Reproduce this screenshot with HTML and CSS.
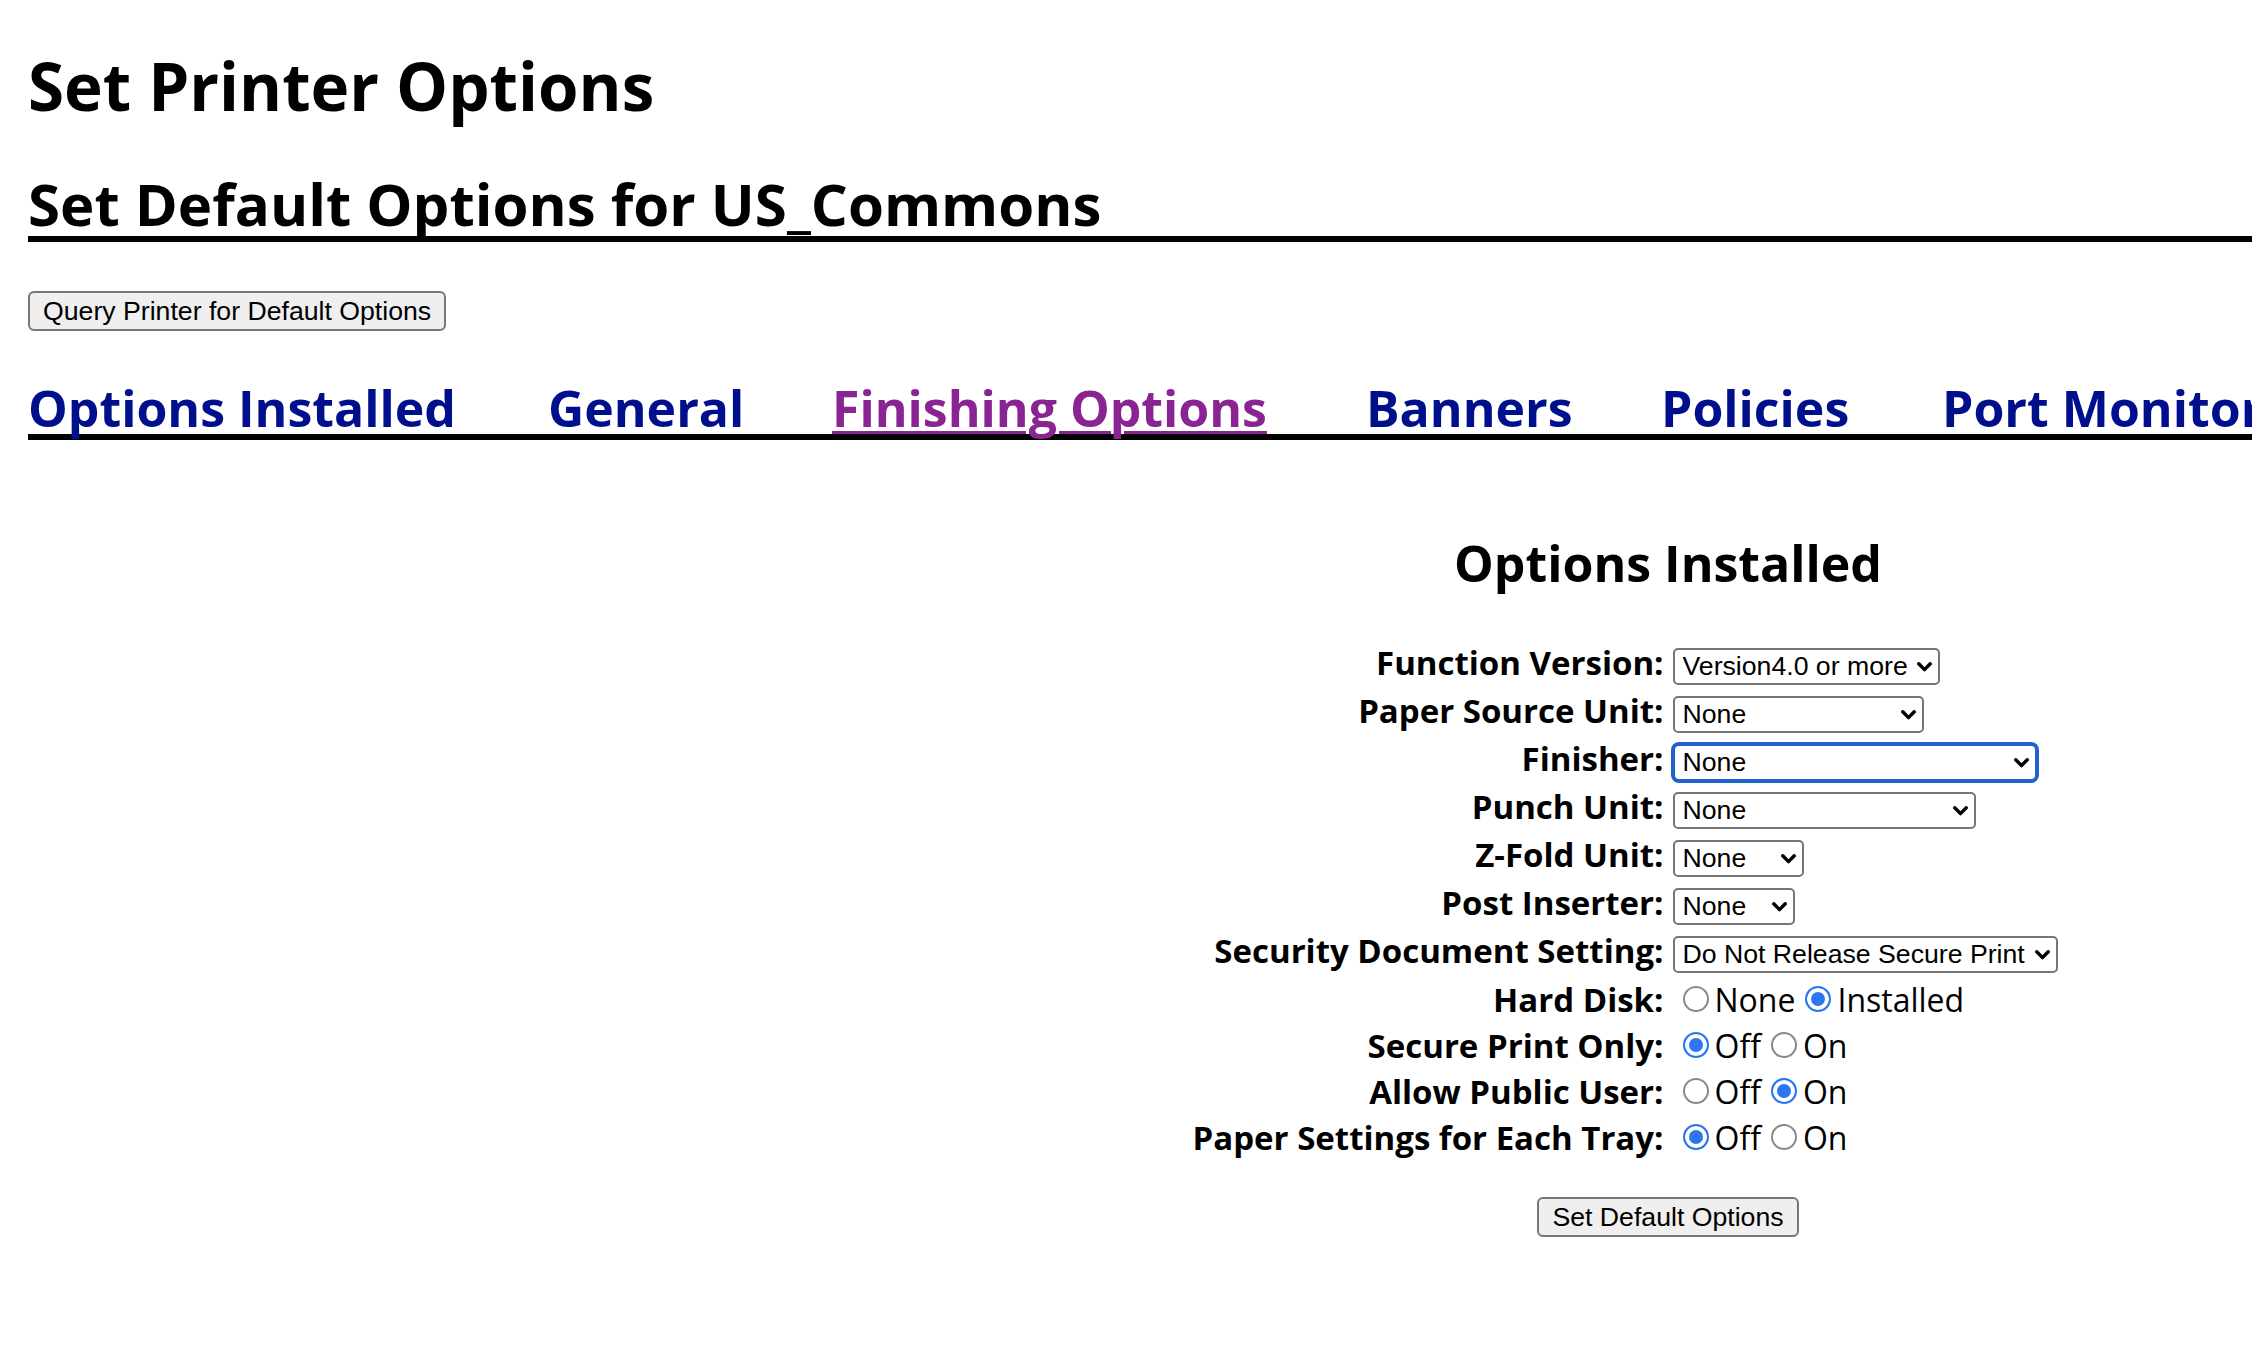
FILE: index.html
```html
<!DOCTYPE html>
<html lang="en">
<head>
<meta charset="utf-8">
<title>Set Printer Options - US_Commons</title>
<link rel="stylesheet" href="styles.css">
</head>
<body>
<main class="page">
  <h1 class="page-title">Set Printer Options</h1>
  <h2 class="section-title">Set Default Options for US_Commons</h2>

  <form class="query-form">
    <button type="button" class="btn">Query Printer for Default Options</button>
  </form>

  <nav class="tabs">
    <a class="tab" href="#installed">Options Installed</a>
    <a class="tab" href="#general">General</a>
    <a class="tab tab-visited" href="#finishing">Finishing Options</a>
    <a class="tab" href="#banners">Banners</a>
    <a class="tab" href="#policies">Policies</a>
    <a class="tab" href="#port">Port Monitor</a>
  </nav>

  <section class="panel" id="installed">
    <h3 class="panel-title">Options Installed</h3>

    <div class="opt-grid">
      <label class="opt-label">Function Version:</label>
      <div class="opt-value">
        <span class="select-wrap">
          <select class="sel sel-version"><option>Version4.0 or more</option><option>Version3.0</option></select>
          <svg class="chev" viewBox="0 0 15 10" width="15" height="10"><polyline points="1.8,1.8 7.5,7.6 13.2,1.8"/></svg>
        </span>
      </div>

      <label class="opt-label">Paper Source Unit:</label>
      <div class="opt-value">
        <span class="select-wrap">
          <select class="sel sel-source"><option>None</option></select>
          <svg class="chev" viewBox="0 0 15 10" width="15" height="10"><polyline points="1.8,1.8 7.5,7.6 13.2,1.8"/></svg>
        </span>
      </div>

      <label class="opt-label">Finisher:</label>
      <div class="opt-value">
        <span class="select-wrap">
          <select class="sel sel-finisher sel-focus"><option>None</option></select>
          <svg class="chev" viewBox="0 0 15 10" width="15" height="10"><polyline points="1.8,1.8 7.5,7.6 13.2,1.8"/></svg>
        </span>
      </div>

      <label class="opt-label">Punch Unit:</label>
      <div class="opt-value">
        <span class="select-wrap">
          <select class="sel sel-punch"><option>None</option></select>
          <svg class="chev" viewBox="0 0 15 10" width="15" height="10"><polyline points="1.8,1.8 7.5,7.6 13.2,1.8"/></svg>
        </span>
      </div>

      <label class="opt-label">Z-Fold Unit:</label>
      <div class="opt-value">
        <span class="select-wrap">
          <select class="sel sel-zfold"><option>None</option></select>
          <svg class="chev" viewBox="0 0 15 10" width="15" height="10"><polyline points="1.8,1.8 7.5,7.6 13.2,1.8"/></svg>
        </span>
      </div>

      <label class="opt-label">Post Inserter:</label>
      <div class="opt-value">
        <span class="select-wrap">
          <select class="sel sel-post"><option>None</option></select>
          <svg class="chev" viewBox="0 0 15 10" width="15" height="10"><polyline points="1.8,1.8 7.5,7.6 13.2,1.8"/></svg>
        </span>
      </div>

      <label class="opt-label">Security Document Setting:</label>
      <div class="opt-value">
        <span class="select-wrap">
          <select class="sel sel-security"><option>Do Not Release Secure Print</option></select>
          <svg class="chev" viewBox="0 0 15 10" width="15" height="10"><polyline points="1.8,1.8 7.5,7.6 13.2,1.8"/></svg>
        </span>
      </div>

      <label class="opt-label">Hard Disk:</label>
      <div class="opt-value radio-row"><label class="radio"><input type="radio" class="radio-input" name="hd">None</label><label class="radio"><input type="radio" class="radio-input" name="hd" checked>Installed</label></div>

      <label class="opt-label">Secure Print Only:</label>
      <div class="opt-value radio-row"><label class="radio"><input type="radio" class="radio-input" name="sp" checked>Off</label><label class="radio"><input type="radio" class="radio-input" name="sp">On</label></div>

      <label class="opt-label">Allow Public User:</label>
      <div class="opt-value radio-row"><label class="radio"><input type="radio" class="radio-input" name="pu">Off</label><label class="radio"><input type="radio" class="radio-input" name="pu" checked>On</label></div>

      <label class="opt-label">Paper Settings for Each Tray:</label>
      <div class="opt-value radio-row"><label class="radio"><input type="radio" class="radio-input" name="ps" checked>Off</label><label class="radio"><input type="radio" class="radio-input" name="ps">On</label></div>
    </div>

    <div class="panel-actions">
      <button type="button" class="btn">Set Default Options</button>
    </div>
  </section>
</main>
</body>
</html>
```

FILE: styles.css
```css
html, body {
  margin: 0;
  padding: 0;
  background: #ffffff;
  overflow: hidden;
}

body {
  font-family: "Open Sans", "DejaVu Sans", sans-serif;
  color: #000000;
}

.page {
  padding-left: 28px;
}

.page-title {
  margin: 46px 0 0;
  font-size: 65.5px;
  line-height: 80px;
  font-weight: 700;
}

.section-title {
  margin: 46px 0 0;
  font-size: 58.2px;
  line-height: 64px;
  font-weight: 700;
  border-bottom: 6px solid #000000;
  white-space: nowrap;
}

.query-form {
  margin: 49px 0 0;
}

.btn {
  font-family: "Liberation Sans", Arial, sans-serif;
  font-size: 26.67px;
  line-height: 32px;
  color: #000000;
  background: #efefef;
  border: 2px solid #767676;
  border-radius: 6px;
  padding: 2px 13px;
  margin: 0;
}

.tabs {
  margin-top: 46px;
  display: grid;
  grid-template-columns: 520px 284px 534px 295px 281px auto;
  border-bottom: 6px solid #000000;
  white-space: nowrap;
}

.tab {
  padding-top: 6px;
  font-size: 50px;
  line-height: 51px;
  font-weight: 700;
  color: #00108c;
  text-decoration: none;
}

.tab-visited {
  color: #8a2492;
  text-decoration: underline;
  text-decoration-thickness: 3px;
  text-underline-offset: 4px;
}

.panel {
  width: 3280px;
}

.panel-title {
  margin: 93px 0 0;
  font-size: 50px;
  line-height: 60px;
  font-weight: 700;
  text-align: center;
}

.opt-grid {
  margin-top: 52px;
  display: grid;
  grid-template-columns: 1fr 1fr;
  column-gap: 9px;
  row-gap: 8px;
  align-items: baseline;
}

.opt-label {
  text-align: right;
  font-size: 33px;
  line-height: 36px;
  font-weight: 700;
  white-space: nowrap;
}

.opt-value {
  white-space: nowrap;
}

.select-wrap {
  position: relative;
  display: inline-block;
}

.sel {
  -webkit-appearance: none;
  appearance: none;
  box-sizing: border-box;
  height: 37px;
  margin: 0;
  padding: 1px 18px 1px 8px;
  font-family: "Liberation Sans", Arial, sans-serif;
  font-size: 26.67px;
  line-height: 31px;
  color: #000000;
  background: #ffffff;
  border: 2px solid #767676;
  border-radius: 5px;
  outline: none;
}

.sel-version { width: 267px; }
.sel-source { width: 251px; }
.sel-finisher { width: 364px; }
.sel-punch { width: 303px; }
.sel-zfold { width: 131px; }
.sel-post { width: 122px; }
.sel-security { width: 385px; }

.sel-focus {
  border-color: #1f62d0;
  box-shadow: 0 0 0 2px #1f62d0;
  border-radius: 6px;
}

.chev {
  position: absolute;
  right: 8px;
  top: 50%;
  margin-top: -5px;
  fill: none;
  stroke: #000000;
  stroke-width: 3.4;
  stroke-linecap: round;
  stroke-linejoin: round;
  pointer-events: none;
}

.radio-row {
  font-size: 32px;
  line-height: 38px;
}

.radio {
  font-weight: 400;
}

.radio-input {
  -webkit-appearance: none;
  appearance: none;
  box-sizing: border-box;
  display: inline-block;
  width: 26px;
  height: 26px;
  margin: 0 6px 0 10px;
  border: 2px solid #8a8a8a;
  border-radius: 50%;
  background: #ffffff;
  vertical-align: baseline;
}

.radio-input:checked {
  border: 2px solid #2b77f2;
  background: #2b77f2;
  box-shadow: inset 0 0 0 4px #ffffff;
}

.panel-actions {
  margin-top: 40px;
  text-align: center;
}
```
